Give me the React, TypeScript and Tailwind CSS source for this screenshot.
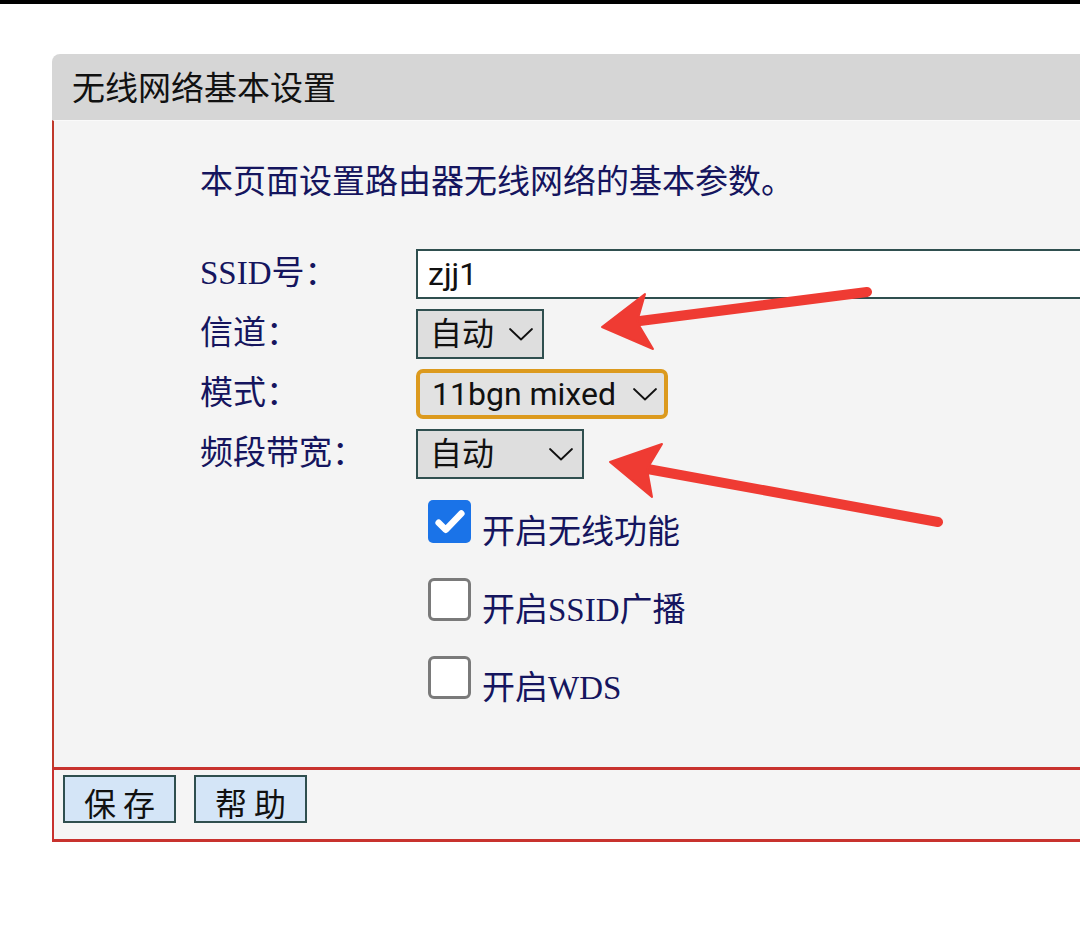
const labelFont = "font-['Liberation_Serif','Noto_Sans_CJK_SC',serif]";
const cjkSans = "font-['Noto_Sans_CJK_SC',sans-serif]";

function Chevron() {
  return (
    <svg width="26" height="15" viewBox="0 0 26 15" fill="none" className="shrink-0">
      <polyline points="2,2 13,12.5 24,2" stroke="#111" strokeWidth="1.8" strokeLinecap="round" strokeLinejoin="round" />
    </svg>
  );
}

function Select({ text, width, focused }: { text: string; width: string; focused?: boolean }) {
  return (
    <div
      className={`${width} shrink-0 h-[50px] flex items-center justify-between pl-[12px] text-[32px] text-[#111] font-['Roboto','Noto_Sans_CJK_SC',sans-serif] ${
        focused ? "border-[4px] border-[#dc9a1e] rounded-[7px] bg-[#e2e2e2] pr-[6px]" : "border-2 border-[#2f4f4f] bg-[#dedede] pr-[8px]"
      }`}
    >
      <span className="leading-none">{text}</span>
      <Chevron />
    </div>
  );
}

function CheckRow({ label, checked }: { label: string; checked?: boolean }) {
  return (
    <div className="flex items-start gap-[11px] h-[78px]">
      {checked ? (
        <div className="w-[43px] h-[43px] shrink-0 rounded-[5px] bg-[#1a73e8] flex items-center justify-center">
          <svg width="34" height="34" viewBox="0 0 24 24" fill="none">
            <path d="M4 12.5l5 5L20 6" stroke="white" strokeWidth="4.6" strokeLinecap="round" strokeLinejoin="round" />
          </svg>
        </div>
      ) : (
        <div className="w-[43px] h-[43px] shrink-0 rounded-[6px] border-[3px] border-[#7a7a7a] bg-white" />
      )}
      <span className={`${labelFont} text-[33px] leading-[40px] mt-[12px] text-[#15155e]`}>{label}</span>
    </div>
  );
}

export default function App() {
  return (
    <div className="relative w-[1080px] h-[939px] bg-white overflow-hidden border-t-[4px] border-black">
      <div className="ml-[52px] mt-[50px] w-[1040px]">
        {/* header */}
        <div className={`h-[66px] bg-[#d6d6d6] rounded-tl-[8px] pl-[20px] flex items-center text-[33px] text-[#111] ${cjkSans}`}>
          无线网络基本设置
        </div>

        {/* body */}
        <div className="h-[647px] border-l-2 border-t border-[#c0392b] border-t-[#fafafa] bg-[#f4f4f4] pl-[146px] pt-[38px]">
          <p className={`${cjkSans} text-[33px] leading-[40px] text-[#15155e]`}>本页面设置路由器无线网络的基本参数。</p>

          <div className="mt-[50px] flex flex-col gap-[10px]">
            <div className="flex items-center h-[50px]">
              <span className={`w-[216px] shrink-0 ${labelFont} text-[33px] text-[#15155e]`}>SSID号：</span>
              <div className="w-[700px] shrink-0 h-[50px] border-2 border-[#2f4f4f] bg-white pl-[10px] flex items-center text-[32px] text-[#111] font-['Roboto',sans-serif]">
                zjj1
              </div>
            </div>
            <div className="flex items-center h-[50px]">
              <span className={`w-[216px] shrink-0 ${labelFont} text-[33px] text-[#15155e]`}>信道：</span>
              <Select text="自动" width="w-[128px]" />
            </div>
            <div className="flex items-center h-[50px]">
              <span className={`w-[216px] shrink-0 ${labelFont} text-[33px] text-[#15155e]`}>模式：</span>
              <Select text="11bgn mixed" width="w-[252px]" focused />
            </div>
            <div className="flex items-center h-[50px]">
              <span className={`w-[216px] shrink-0 ${labelFont} text-[33px] text-[#15155e]`}>频段带宽：</span>
              <Select text="自动" width="w-[168px]" />
            </div>
          </div>

          <div className="mt-[21px] ml-[228px] flex flex-col">
            <CheckRow label="开启无线功能" checked />
            <CheckRow label="开启SSID广播" />
            <CheckRow label="开启WDS" />
          </div>
        </div>

        {/* footer */}
        <div className="h-[75px] border-l-2 border-y-[3px] border-[#c8322e] bg-[#f5f5f5] pl-[9px] pt-[5px] flex items-start gap-[18px]">
          {["保 存", "帮 助"].map((t) => (
            <button
              key={t}
              className={`w-[113px] h-[48px] bg-[#d4e5f7] border-2 border-[#2f4f4f] text-[32px] leading-none text-[#111] ${cjkSans} flex items-center justify-center pt-[6px]`}
            >
              {t}
            </button>
          ))}
        </div>
      </div>

      {/* annotation arrows */}
      <svg className="absolute inset-0 pointer-events-none" width="1080" height="939">
        <g fill="#ef3b33" stroke="#ef3b33" strokeLinecap="round" strokeLinejoin="round">
          <line x1="632" y1="318" x2="867" y2="288" strokeWidth="10" />
          <polygon points="602,323 645,290 637,318 653,345" strokeWidth="2" />
          <line x1="642" y1="464" x2="938" y2="518" strokeWidth="10" />
          <polygon points="610,458 662,440 647,465 652,493" strokeWidth="2" />
        </g>
      </svg>
    </div>
  );
}
